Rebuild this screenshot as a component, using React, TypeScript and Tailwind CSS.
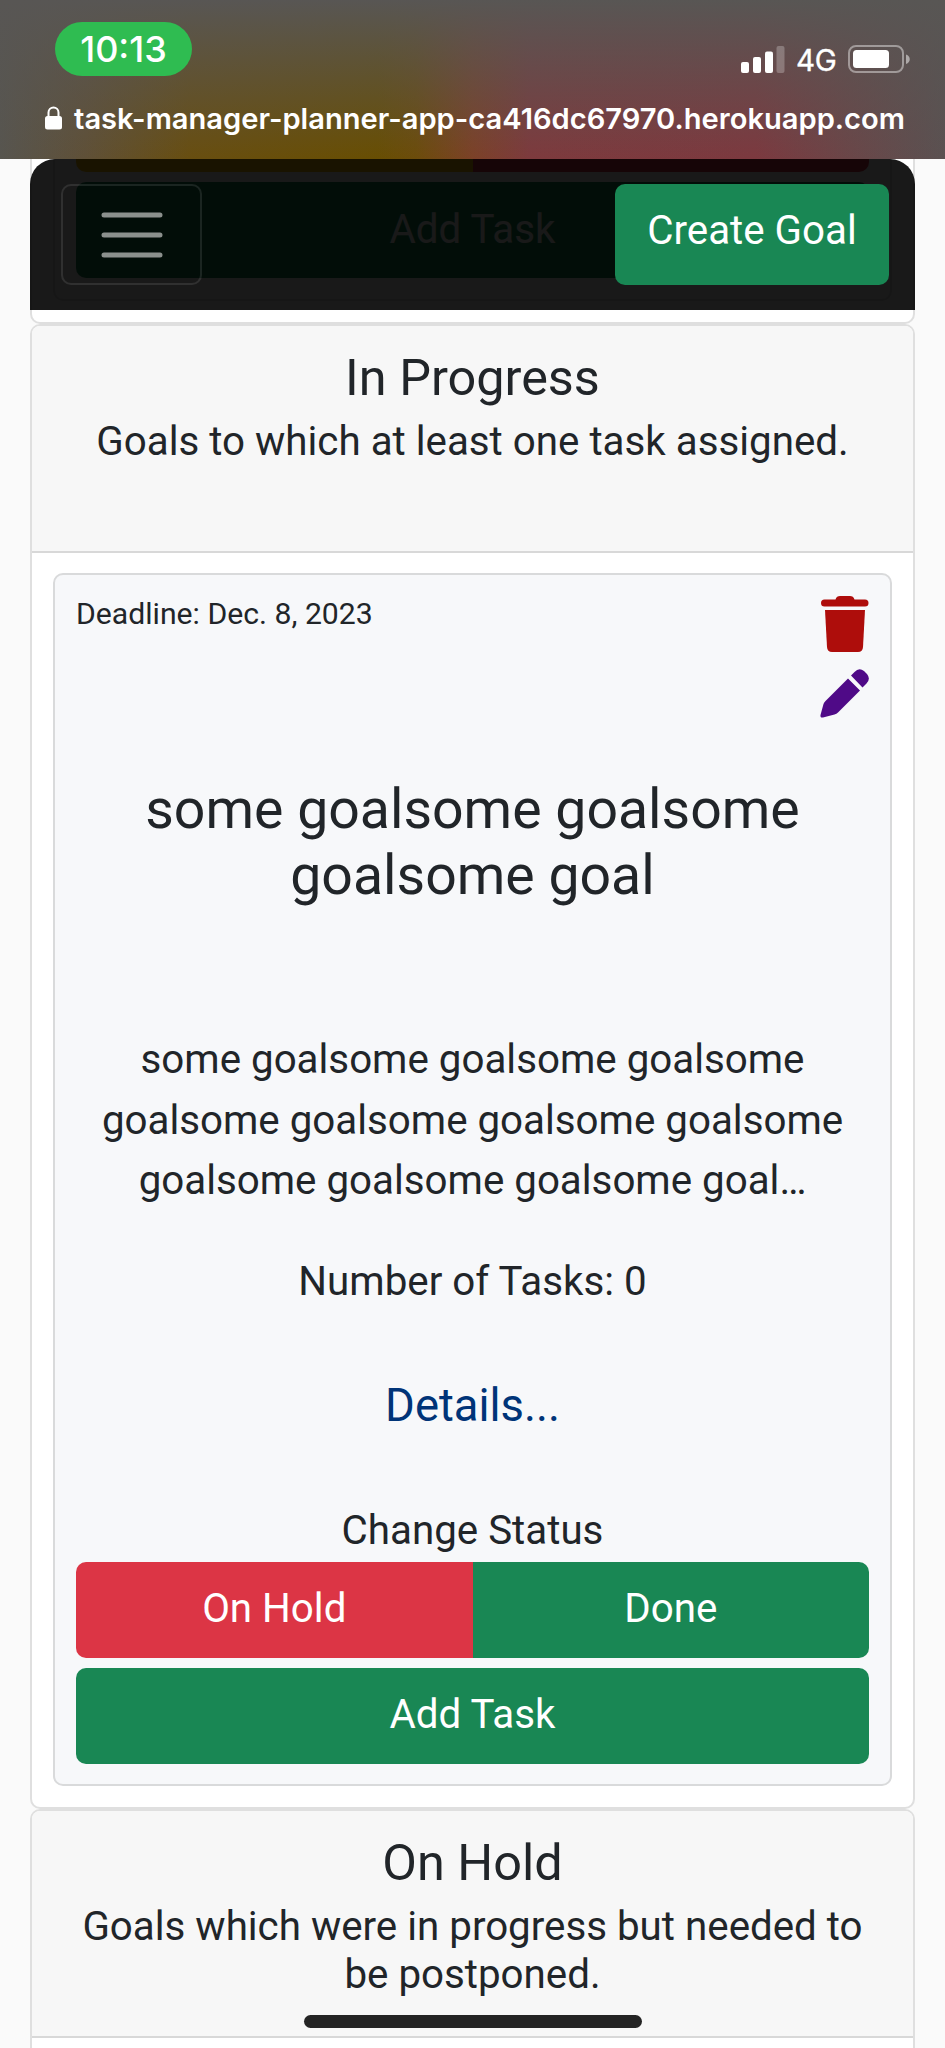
import React from 'react';

function StatusBar() {
  return (
    <header
      className="h-[159px] shrink-0 text-white font-[Inter,sans-serif] bg-[linear-gradient(180deg,rgba(88,86,84,1)_0%,rgba(88,86,84,0.75)_25%,rgba(88,86,84,0)_100%),linear-gradient(90deg,#57554f_0%,#5f5037_9%,#684e10_20%,#684e02_40%,#6c4c0a_44%,#7c4127_50%,#7d3a3d_56%,#7c393f_80%,#6a4648_90%,#5a5151_100%)]"
    >
      <div className="flex items-start justify-between pl-[55px] pr-[34px] pt-[22px]">
        <div className="flex h-[54px] w-[137px] items-center justify-center rounded-full bg-[#2fbc51] text-[36px] font-medium leading-none">
          <span>10:13</span>
        </div>
        <div className="mt-[22px] flex items-center">
          <svg width="44" height="28" viewBox="0 0 44 28" fill="white">
            <rect x="0" y="17" width="8" height="11" rx="2" />
            <rect x="12" y="12" width="8" height="16" rx="2" />
            <rect x="24" y="6.500" width="8" height="21.500" rx="2" />
            <rect x="35.500" y="1" width="8" height="27" rx="2" opacity="0.25" />
          </svg>
          <span className="ml-[11px] mt-[2px] w-[41px] text-[29.500px] leading-7 tracking-[-0.3px] [-webkit-text-stroke:0.4px_white]">4G</span>
          <svg className="ml-[11px]" width="63" height="28" viewBox="0 0 63 28" fill="none">
            <rect x="1" y="1" width="54" height="26" rx="7" stroke="white" strokeOpacity="0.42" strokeWidth="2" />
            <rect x="5" y="5" width="36" height="18" rx="3.500" fill="white" />
            <path d="M58 9.500c5 1.500 5 8 0 9.500z" fill="white" fillOpacity="0.5" />
          </svg>
        </div>
      </div>
      <div className="flex h-9 items-center pl-[45px] mt-[24px]">
        <svg width="17" height="24" viewBox="0 0 17 24">
          <path d="M3.500 11V6.500a5 5 0 0 1 10 0V11" fill="none" stroke="white" strokeWidth="2" />
          <rect y="10" width="17" height="13.500" rx="2.500" fill="white" />
        </svg>
        <span className="ml-[12px] mt-px whitespace-nowrap text-[29.100px] font-semibold leading-9">
          task-manager-planner-app-ca416dc67970.herokuapp.com
        </span>
      </div>
    </header>
  );
}

function Navbar() {
  return (
    <nav className="absolute inset-x-[-2px] top-0 flex h-[151px] items-start justify-between rounded-t-[25px] bg-black/90 pl-[31px] pr-[26px] pt-[25px]">
      <button className="flex h-[101px] w-[141px] items-center rounded-[10px] border-2 border-white/10 pl-[38px]">
        <svg width="62" height="48" viewBox="0 0 62 48" stroke="#8b908d" strokeWidth="5" strokeLinecap="round">
          <path d="M3 4h56M3 24h56M3 44h56" />
        </svg>
      </button>
      <button className="h-[101px] w-[274px] rounded-[10px] bg-[#198754] pb-[6px] text-[40.300px] leading-none text-white">
        Create Goal
      </button>
    </nav>
  );
}

function ToDoCard() {
  return (
    <section className="relative h-[165px] rounded-b-[10px] border-2 border-t-0 border-[#dfdfdf] bg-white px-[21px] pb-[21px]">
      <div className="h-[142px] rounded-b-[10px] border-2 border-t-0 border-[#dfdfdf] bg-[#f7f8fa] px-[21px]">
        <div className="flex h-[13px] overflow-hidden rounded-b-[10px]">
          <div className="w-1/2 bg-[#ffc107]" />
          <div className="w-1/2 bg-[#dc3545]" />
        </div>
        <div className="mt-[10px] h-[96px] rounded-[10px] bg-[#198754] text-center text-[40.300px] leading-[95px] text-white">
          Add Task
        </div>
      </div>
      <Navbar />
    </section>
  );
}

function TrashIcon() {
  return (
    <svg width="48" height="56" viewBox="0 0 48 56" fill="#ae0d0b">
      <path d="M3.500 3.500H14.500C15 1 17 0 19 0H29C31 0 33 1 33.500 3.500H44A3.500 3.500 0 0 1 44 10.500H3.500A3.500 3.500 0 0 1 3.500 3.500Z" />
      <path d="M4 14H44L42 51Q41.700 56 37 56H11Q6.300 56 6 51Z" />
    </svg>
  );
}

function PencilIcon() {
  return (
    <svg width="49" height="49" viewBox="0 0 49 49" fill="#4f0a87">
      <path d="M31 6.500 34.500 3Q39 -2 44 2L47 5Q51 10 46.500 14.500L42.500 18.500Z" />
      <path d="M28 9.500 40 21.500 18 43.500Q16.500 45 14.500 45.500L3 48.500Q0 49 .5 46L3.500 35Q4 33.500 5.500 32Z" />
    </svg>
  );
}

function SectionHeader({ title, children }: { title: string; children: React.ReactNode }) {
  return (
    <div className="h-[227px] border-b-2 border-[#d8d8d8] bg-[#f7f7f7] px-[40px] pt-[20px] text-center">
      <h2 className="text-[50.400px] leading-[64px]">{title}</h2>
      <p className="text-[40.300px] leading-[48.400px] mt-[8px]">{children}</p>
    </div>
  );
}

export default function App() {
  return (
    <div className="relative flex h-[2048px] w-[945px] flex-col overflow-hidden bg-[#fafafa] font-[Roboto,sans-serif] text-[#212529]">
      <StatusBar />
      <main className="px-[30px]">
        <ToDoCard />
        <section className="h-[1485px] overflow-hidden rounded-[10px] border-2 border-[#dfdfdf] bg-white">
          <SectionHeader title="In Progress">Goals to which at least one task assigned.</SectionHeader>
          <article className="mx-[21px] mt-[20px] h-[1213px] rounded-[10px] border-2 border-[#d9dadb] bg-[#f7f8fa] px-[21px] pt-[21px] text-center">
            <div className="flex h-[125px] items-start justify-between">
              <p className="text-[30.200px] leading-9">Deadline: Dec. 8, 2023</p>
              <div className="flex flex-col items-end gap-[17px]">
                <TrashIcon />
                <PencilIcon />
              </div>
            </div>
            <h3 className="mt-[56px] text-[55.400px] leading-[65.500px]">
              some goalsome goalsome
              <br />
              goalsome goal
            </h3>
            <p className="mt-[122px] text-[40.300px] leading-[60.500px]">
              some goalsome goalsome goalsome
              <br />
              goalsome goalsome goalsome goalsome
              <br />
              goalsome goalsome goalsome goal…
            </p>
            <p className="mt-[40px] text-[40.300px] leading-[60.500px]">Number of Tasks: 0</p>
            <a className="mt-[60px] block text-[45.400px] leading-[68px] text-[#003478]">Details...</a>
            <p className="mt-[61px] text-[40.300px] leading-[60px]">Change Status</p>
            <div className="mt-px flex h-[96px] overflow-hidden rounded-[10px] text-[40.300px] text-white">
              <button className="w-1/2 bg-[#dc3545] pb-[2px]">On Hold</button>
              <button className="w-1/2 bg-[#198754] pb-[2px]">Done</button>
            </div>
            <button className="mt-[10px] block h-[96px] w-full rounded-[10px] bg-[#198754] pb-px text-[40.300px] text-white">
              Add Task
            </button>
          </article>
        </section>
        <section className="h-[300px] overflow-hidden rounded-[10px] border-2 border-[#dfdfdf] bg-white">
          <SectionHeader title="On Hold">Goals which were in progress but needed to be postponed.</SectionHeader>
        </section>
      </main>
      <div className="absolute bottom-[20px] left-[304px] h-[13px] w-[338px] rounded-full bg-[#242424]" />
    </div>
  );
}
